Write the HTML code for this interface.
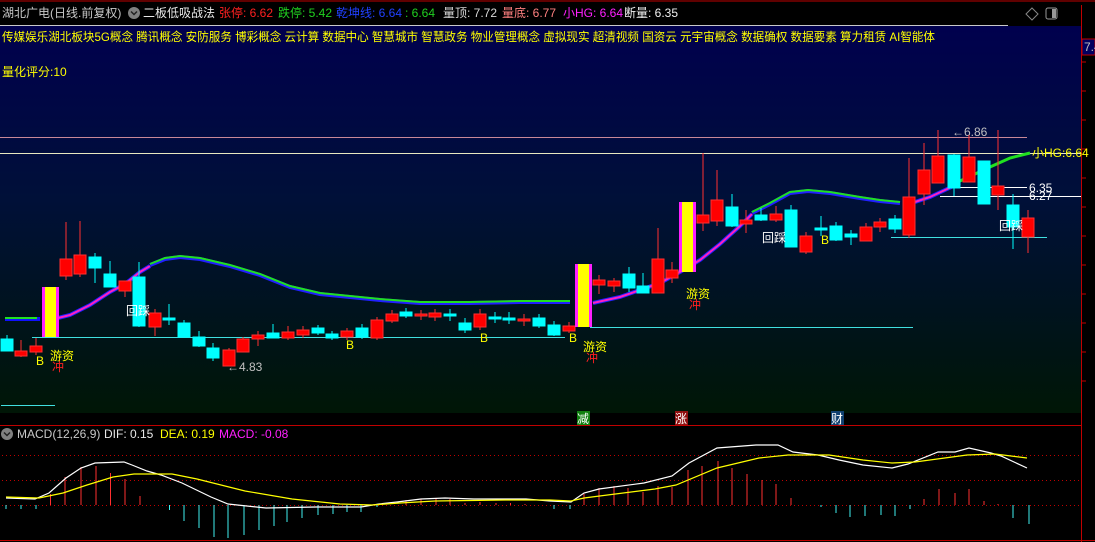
<!DOCTYPE html>
<html><head><meta charset="utf-8"><style>
html,body{margin:0;padding:0;background:#000;width:1095px;height:542px;overflow:hidden}
svg{display:block}
text{font-family:"Liberation Sans","WenQuanYi Zen Hei","Noto Sans CJK SC",sans-serif;font-size:12px}
</style></head><body>
<svg width="1095" height="542" viewBox="0 0 1095 542" xmlns="http://www.w3.org/2000/svg">
<defs>
<linearGradient id="bg" x1="0" y1="0" x2="0" y2="1">
<stop offset="0" stop-color="#00004e"/><stop offset="0.45" stop-color="#001038"/><stop offset="1" stop-color="#001606"/>
</linearGradient>
</defs>
<rect width="1095" height="542" fill="#000"/>
<rect x="0" y="26" width="1081" height="387" fill="url(#bg)"/>
<line x1="0" y1="1" x2="1095" y2="1" stroke="#c00000" stroke-width="1"/>
<line x1="0" y1="25.5" x2="1008" y2="25.5" stroke="#c8c8c8"/>
<rect x="1081" y="5" width="14" height="408" fill="#000"/>
<line x1="1081.5" y1="5" x2="1081.5" y2="542" stroke="#c00000"/>
<rect x="1082" y="39" width="13" height="16" fill="#000060" stroke="#c00000"/>
<text x="1084" y="51" fill="#c0c0c0" font-size="11">7.4</text>
<g stroke="#c00000"><line x1="1081" y1="62" x2="1086" y2="62"/><line x1="1081" y1="91" x2="1086" y2="91"/><line x1="1081" y1="120" x2="1086" y2="120"/><line x1="1081" y1="149" x2="1086" y2="149"/><line x1="1081" y1="178" x2="1086" y2="178"/><line x1="1081" y1="207" x2="1086" y2="207"/><line x1="1081" y1="236" x2="1086" y2="236"/><line x1="1081" y1="265" x2="1086" y2="265"/><line x1="1081" y1="294" x2="1086" y2="294"/><line x1="1081" y1="323" x2="1086" y2="323"/><line x1="1081" y1="352" x2="1086" y2="352"/><line x1="1081" y1="381" x2="1086" y2="381"/></g>

<text x="2" y="17" fill="#c8c8c8">湖北广电(日线.前复权)</text>
<circle cx="134" cy="13" r="6" fill="#808080"/><path d="M131 11.5l3 3 3-3" stroke="#222" stroke-width="1.5" fill="none"/>
<text x="143" y="17" fill="#e8e8e8">二板低吸战法</text>
<text x="219" y="17" fill="#ff2020">张停: 6.62</text>
<text x="278" y="17" fill="#20d020">跌停: 5.42</text>
<text x="336" y="17" fill="#2040ff">乾坤线: 6.64</text>
<text x="405" y="17" fill="#20d020">: 6.64</text>
<text x="443" y="17" fill="#d8d8d8">量顶: 7.72</text>
<text x="502" y="17" fill="#ff8080">量底: 6.77</text>
<text x="563" y="17" fill="#ff20ff">小HG: 6.64</text>
<text x="624" y="17" fill="#f0f0f0">断量: 6.35</text>
<path d="M1032 8l6 6-6 6-6-6z" stroke="#888" fill="none"/>
<rect x="1046" y="8" width="11" height="11" rx="2" stroke="#999" fill="none"/><rect x="1052" y="9" width="4" height="9" fill="#999"/>

<text x="2" y="41" fill="#ffff00" textLength="933" lengthAdjust="spacingAndGlyphs">传媒娱乐湖北板块5G概念 腾讯概念 安防服务 博彩概念 云计算 数据中心 智慧城市 智慧政务 物业管理概念 虚拟现实 超清视频 国资云 元宇宙概念 数据确权 数据要素 算力租赁 AI智能体</text>
<text x="2" y="76" fill="#ffff00">量化评分:10</text>

<line x1="0" y1="137.5" x2="1027" y2="137.5" stroke="#c88898"/>
<line x1="0" y1="153.5" x2="1081" y2="153.5" stroke="#e8e8c0"/>
<line x1="955" y1="187.5" x2="1027" y2="187.5" stroke="#ffffff"/>
<line x1="940" y1="196.5" x2="1081" y2="196.5" stroke="#ffffff"/>
<line x1="32" y1="337.5" x2="565" y2="337.5" stroke="#40e0e0"/>
<line x1="590" y1="327.5" x2="913" y2="327.5" stroke="#40e0e0"/>
<line x1="891" y1="237.5" x2="1047" y2="237.5" stroke="#40e0e0"/>
<line x1="1" y1="405.5" x2="55" y2="405.5" stroke="#40e0e0"/>
<text x="952" y="136" fill="#c0c0c0">←6.86</text>
<text x="1029" y="192" fill="#ffffff">6.35</text>
<text x="1029" y="200" fill="#ffffff">6.27</text>
<text x="1032" y="157" fill="#ffff00">小HG:6.64</text>

<polyline points="5,319 40,319" stroke="#1010ff" stroke-width="4" fill="none"/>
<polyline points="5,318 37,318" stroke="#20e020" stroke-width="2" fill="none"/>
<polyline points="58,318 70,315 90,305 110,292 125,284 140,272 150,266" stroke="#2020ff" stroke-width="4" fill="none"/>
<polyline points="58,318 70,315 90,305 110,292 125,284 140,272 150,266" stroke="#ff20c0" stroke-width="2" fill="none"/>
<polyline points="150,265 165,259 180,257 200,259 230,266 260,275 290,287 320,294 350,297 380,300 420,303 470,303 520,302 570,302" stroke="#2020ff" stroke-width="4" fill="none"/>
<polyline points="150,264 165,258 180,256 200,258 230,265 260,274 290,286 320,293 350,296 380,299 420,302 470,302 520,301 570,301" stroke="#20e020" stroke-width="2" fill="none"/>
<polyline points="593,303 620,297 640,290 660,283 680,272 700,260 720,244 740,226 752,214" stroke="#2020ff" stroke-width="4" fill="none"/>
<polyline points="593,303 620,297 640,290 660,283 680,272 700,260 720,244 740,226 752,214" stroke="#ff20c0" stroke-width="2" fill="none"/>
<polyline points="752,213 770,204 790,193 808,191 830,193 860,198 880,201 900,203" stroke="#2020ff" stroke-width="4" fill="none"/>
<polyline points="752,212 770,203 790,192 808,190 830,192 860,197 880,200 900,202" stroke="#20e020" stroke-width="2" fill="none"/>
<polyline points="915,202 930,197 945,190 960,183" stroke="#2020ff" stroke-width="4" fill="none"/>
<polyline points="915,202 930,197 945,190 960,183" stroke="#ff20c0" stroke-width="2" fill="none"/>
<polyline points="960,181 990,167 1010,158 1030,153" stroke="#20e020" stroke-width="3" fill="none"/>

<g stroke-width="1">
<g fill="#00ffff" stroke="#00ffff">
<line x1="7" y1="335" x2="7" y2="351"/><rect x="1" y="339" width="12" height="12"/>
<line x1="95" y1="253" x2="95" y2="283"/><rect x="89" y="257" width="12" height="11"/>
<line x1="110" y1="261" x2="110" y2="287"/><rect x="104" y="274" width="12" height="13"/>
<line x1="139" y1="262" x2="139" y2="327"/><rect x="133" y="277" width="12" height="49"/>
<line x1="169" y1="304" x2="169" y2="325"/><rect x="163" y="318" width="12" height="2"/>
<line x1="184" y1="320" x2="184" y2="337"/><rect x="178" y="323" width="12" height="14"/>
<line x1="199" y1="331" x2="199" y2="347"/><rect x="193" y="337" width="12" height="9"/>
<line x1="213" y1="343" x2="213" y2="361"/><rect x="207" y="348" width="12" height="10"/>
<line x1="273" y1="324" x2="273" y2="338"/><rect x="267" y="333" width="12" height="5"/>
<line x1="318" y1="325" x2="318" y2="335"/><rect x="312" y="328" width="12" height="5"/>
<line x1="332" y1="331" x2="332" y2="340"/><rect x="326" y="334" width="12" height="4"/>
<line x1="362" y1="324" x2="362" y2="339"/><rect x="356" y="328" width="12" height="9"/>
<line x1="406" y1="308" x2="406" y2="318"/><rect x="400" y="312" width="12" height="4"/>
<line x1="450" y1="309" x2="450" y2="321"/><rect x="444" y="314" width="12" height="2"/>
<line x1="465" y1="318" x2="465" y2="333"/><rect x="459" y="323" width="12" height="7"/>
<line x1="495" y1="312" x2="495" y2="323"/><rect x="489" y="317" width="12" height="2"/>
<line x1="509" y1="312" x2="509" y2="324"/><rect x="503" y="318" width="12" height="2"/>
<line x1="539" y1="314" x2="539" y2="328"/><rect x="533" y="318" width="12" height="8"/>
<line x1="554" y1="321" x2="554" y2="336"/><rect x="548" y="325" width="12" height="10"/>
<line x1="629" y1="267" x2="629" y2="292"/><rect x="623" y="274" width="12" height="14"/>
<line x1="643" y1="273" x2="643" y2="293"/><rect x="637" y="286" width="12" height="7"/>
<line x1="732" y1="194" x2="732" y2="227"/><rect x="726" y="207" width="12" height="19"/>
<line x1="761" y1="208" x2="761" y2="221"/><rect x="755" y="215" width="12" height="5"/>
<line x1="791" y1="205" x2="791" y2="247"/><rect x="785" y="210" width="12" height="37"/>
<line x1="821" y1="216" x2="821" y2="236"/><rect x="815" y="228" width="12" height="2"/>
<line x1="836" y1="222" x2="836" y2="241"/><rect x="830" y="226" width="12" height="14"/>
<line x1="851" y1="230" x2="851" y2="245"/><rect x="845" y="234" width="12" height="3"/>
<line x1="895" y1="215" x2="895" y2="233"/><rect x="889" y="219" width="12" height="10"/>
<line x1="954" y1="154" x2="954" y2="196"/><rect x="948" y="155" width="12" height="33"/>
<line x1="984" y1="161" x2="984" y2="204"/><rect x="978" y="161" width="12" height="43"/>
<line x1="1013" y1="194" x2="1013" y2="249"/><rect x="1007" y="205" width="12" height="22"/>
</g>
<g fill="#ff0000" stroke="#ff3030">
<line x1="21" y1="340" x2="21" y2="357"/><rect x="15" y="351" width="12" height="5"/>
<line x1="36" y1="338" x2="36" y2="355"/><rect x="30" y="346" width="12" height="6"/>
<line x1="66" y1="222" x2="66" y2="280"/><rect x="60" y="259" width="12" height="17"/>
<line x1="80" y1="221" x2="80" y2="277"/><rect x="74" y="255" width="12" height="19"/>
<line x1="125" y1="281" x2="125" y2="297"/><rect x="119" y="281" width="12" height="10"/>
<line x1="155" y1="309" x2="155" y2="336"/><rect x="149" y="313" width="12" height="14"/>
<line x1="229" y1="348" x2="229" y2="366"/><rect x="223" y="350" width="12" height="16"/>
<line x1="243" y1="337" x2="243" y2="352"/><rect x="237" y="339" width="12" height="13"/>
<line x1="258" y1="331" x2="258" y2="346"/><rect x="252" y="335" width="12" height="4"/>
<line x1="288" y1="326" x2="288" y2="340"/><rect x="282" y="332" width="12" height="6"/>
<line x1="303" y1="326" x2="303" y2="338"/><rect x="297" y="330" width="12" height="5"/>
<line x1="347" y1="328" x2="347" y2="340"/><rect x="341" y="331" width="12" height="6"/>
<line x1="377" y1="317" x2="377" y2="340"/><rect x="371" y="320" width="12" height="18"/>
<line x1="392" y1="310" x2="392" y2="323"/><rect x="386" y="314" width="12" height="7"/>
<line x1="421" y1="310" x2="421" y2="320"/><rect x="415" y="314" width="12" height="2"/>
<line x1="435" y1="309" x2="435" y2="321"/><rect x="429" y="313" width="12" height="4"/>
<line x1="480" y1="309" x2="480" y2="330"/><rect x="474" y="314" width="12" height="13"/>
<line x1="524" y1="314" x2="524" y2="326"/><rect x="518" y="319" width="12" height="2"/>
<line x1="569" y1="322" x2="569" y2="333"/><rect x="563" y="326" width="12" height="5"/>
<line x1="599" y1="275" x2="599" y2="294"/><rect x="593" y="280" width="12" height="5"/>
<line x1="614" y1="278" x2="614" y2="292"/><rect x="608" y="281" width="12" height="5"/>
<line x1="658" y1="228" x2="658" y2="293"/><rect x="652" y="259" width="12" height="34"/>
<line x1="672" y1="262" x2="672" y2="283"/><rect x="666" y="270" width="12" height="8"/>
<line x1="703" y1="153" x2="703" y2="231"/><rect x="697" y="215" width="12" height="8"/>
<line x1="717" y1="170" x2="717" y2="226"/><rect x="711" y="200" width="12" height="21"/>
<line x1="746" y1="210" x2="746" y2="233"/><rect x="740" y="220" width="12" height="4"/>
<line x1="776" y1="206" x2="776" y2="222"/><rect x="770" y="214" width="12" height="6"/>
<line x1="806" y1="232" x2="806" y2="254"/><rect x="800" y="236" width="12" height="16"/>
<line x1="866" y1="223" x2="866" y2="241"/><rect x="860" y="227" width="12" height="14"/>
<line x1="880" y1="218" x2="880" y2="232"/><rect x="874" y="222" width="12" height="5"/>
<line x1="909" y1="158" x2="909" y2="238"/><rect x="903" y="197" width="12" height="38"/>
<line x1="924" y1="143" x2="924" y2="205"/><rect x="918" y="170" width="12" height="24"/>
<line x1="938" y1="130" x2="938" y2="183"/><rect x="932" y="156" width="12" height="27"/>
<line x1="969" y1="135" x2="969" y2="182"/><rect x="963" y="157" width="12" height="25"/>
<line x1="998" y1="130" x2="998" y2="210"/><rect x="992" y="186" width="12" height="9"/>
<line x1="1028" y1="210" x2="1028" y2="253"/><rect x="1022" y="218" width="12" height="19"/>
</g>
<rect x="42" y="287" width="17" height="50" fill="#ff20ff"/><rect x="45" y="287" width="11" height="50" fill="#ffff00"/>
<rect x="575" y="264" width="17" height="63" fill="#ff20ff"/><rect x="578" y="264" width="11" height="63" fill="#ffff00"/>
<rect x="679" y="202" width="17" height="70" fill="#ff20ff"/><rect x="682" y="202" width="11" height="70" fill="#ffff00"/>
</g>

<text x="126" y="315" fill="#ffffff">回踩</text>
<text x="762" y="242" fill="#ffffff">回踩</text>
<text x="999" y="230" fill="#ffffff">回踩</text>
<text x="50" y="360" fill="#ffff00">游资</text>
<text x="583" y="351" fill="#ffff00">游资</text>
<text x="686" y="298" fill="#ffff00">游资</text>
<text x="52" y="371" fill="#ff2020" font-size="11">冲</text>
<text x="586" y="362" fill="#ff2020" font-size="11">冲</text>
<text x="689" y="309" fill="#ff2020" font-size="11">冲</text>
<text x="36" y="365" fill="#ffff00" font-size="11">B</text>
<text x="346" y="349" fill="#ffff00" font-size="11">B</text>
<text x="480" y="342" fill="#ffff00" font-size="11">B</text>
<text x="569" y="342" fill="#ffff00" font-size="11">B</text>
<text x="821" y="244" fill="#ffff00" font-size="11">B</text>
<text x="227" y="371" fill="#c0c0c0">←4.83</text>

<rect x="577" y="411" width="13" height="14" fill="#108010"/><text x="577" y="423" fill="#fff">减</text>
<rect x="675" y="411" width="13" height="14" fill="#901010"/><text x="675" y="423" fill="#fff">涨</text>
<rect x="831" y="411" width="13" height="14" fill="#104070"/><text x="831" y="423" fill="#fff">财</text>

<line x1="0" y1="425.5" x2="1081" y2="425.5" stroke="#c00000"/>
<line x1="0" y1="540.5" x2="1095" y2="540.5" stroke="#c00000"/>
<circle cx="7" cy="434" r="6" fill="#808080"/><path d="M4 432.5l3 3 3-3" stroke="#222" stroke-width="1.5" fill="none"/>
<text x="17" y="438" fill="#c8c8c8">MACD(12,26,9)</text>
<text x="104" y="438" fill="#e8e8e8">DIF: 0.15</text>
<text x="160" y="438" fill="#ffff00">DEA: 0.19</text>
<text x="219" y="438" fill="#ff20ff">MACD: -0.08</text>
<g stroke="#c00000" stroke-dasharray="1,3">
<line x1="2" y1="455.5" x2="1081" y2="455.5"/><line x1="2" y1="480.5" x2="1081" y2="480.5"/><line x1="2" y1="505.5" x2="1081" y2="505.5"/>
</g>
<g stroke="#ff3030" stroke-width="1">
<line x1="50.5" y1="505" x2="50.5" y2="494"/><line x1="65" y1="505" x2="65" y2="477"/><line x1="81" y1="505" x2="81" y2="467"/><line x1="96" y1="505" x2="96" y2="466"/><line x1="110.5" y1="505" x2="110.5" y2="473"/><line x1="125" y1="505" x2="125" y2="479"/><line x1="140" y1="505" x2="140" y2="496"/>
<line x1="406" y1="505" x2="406" y2="500"/><line x1="421" y1="505" x2="421" y2="499"/><line x1="436" y1="505" x2="436" y2="498"/><line x1="450" y1="505" x2="450" y2="499"/><line x1="465" y1="505" x2="465" y2="503"/><line x1="480" y1="505" x2="480" y2="502"/><line x1="496" y1="505" x2="496" y2="503"/><line x1="510.5" y1="505" x2="510.5" y2="503"/><line x1="525" y1="505" x2="525" y2="504"/>
<line x1="584" y1="505" x2="584" y2="494"/><line x1="599" y1="505" x2="599" y2="488"/><line x1="614" y1="505" x2="614" y2="486"/><line x1="628" y1="505" x2="628" y2="488"/><line x1="643" y1="505" x2="643" y2="492"/><line x1="658" y1="505" x2="658" y2="486"/><line x1="672" y1="505" x2="672" y2="487"/><line x1="688" y1="505" x2="688" y2="470"/><line x1="702" y1="505" x2="702" y2="466"/><line x1="718" y1="505" x2="718" y2="461"/><line x1="732" y1="505" x2="732" y2="468"/><line x1="747" y1="505" x2="747" y2="474"/><line x1="762" y1="505" x2="762" y2="480"/><line x1="776" y1="505" x2="776" y2="484"/><line x1="791" y1="505" x2="791" y2="498"/>
<line x1="924" y1="505" x2="924" y2="499"/><line x1="939" y1="505" x2="939" y2="489"/><line x1="955" y1="505" x2="955" y2="493"/><line x1="969" y1="505" x2="969" y2="489"/><line x1="984" y1="505" x2="984" y2="501"/><line x1="998" y1="505" x2="998" y2="504"/>
</g>
<g stroke="#40f0f0" stroke-width="1">
<line x1="6" y1="505" x2="6" y2="509"/><line x1="21" y1="505" x2="21" y2="509"/><line x1="36" y1="505" x2="36" y2="509"/>
<line x1="169.5" y1="505" x2="169.5" y2="510"/><line x1="184" y1="505" x2="184" y2="521"/><line x1="199" y1="505" x2="199" y2="528"/><line x1="214" y1="505" x2="214" y2="537"/><line x1="228" y1="505" x2="228" y2="538"/><line x1="244" y1="505" x2="244" y2="535"/><line x1="259" y1="505" x2="259" y2="530"/><line x1="274" y1="505" x2="274" y2="526"/><line x1="287" y1="505" x2="287" y2="522"/><line x1="302" y1="505" x2="302" y2="518"/><line x1="318" y1="505" x2="318" y2="515"/><line x1="333" y1="505" x2="333" y2="514"/><line x1="347" y1="505" x2="347" y2="512"/><line x1="361" y1="505" x2="361" y2="512"/><line x1="377" y1="505" x2="377" y2="507"/>
<line x1="554" y1="505" x2="554" y2="509"/><line x1="570" y1="505" x2="570" y2="509"/>
<line x1="821" y1="505" x2="821" y2="507"/><line x1="836" y1="505" x2="836" y2="513"/><line x1="850" y1="505" x2="850" y2="517"/><line x1="865" y1="505" x2="865" y2="516"/><line x1="881" y1="505" x2="881" y2="515"/><line x1="895" y1="505" x2="895" y2="516"/><line x1="910" y1="505" x2="910" y2="509"/>
<line x1="1013" y1="505" x2="1013" y2="518"/><line x1="1029" y1="505" x2="1029" y2="524"/>
</g>
<polyline fill="none" stroke="#ffffff" stroke-width="1.2" points="6,498 35,499 49,493 66,478 81,468 95,463 124,462 132,465 147,471 161,475 182,483 211,497 228,504 266,508 316,507 361,507 379,504 397,502 421,499 445,498 474,499 526,499 550,501 571,502 584,493 599,489 644,483 672,476 689,463 717,448 756,445 778,445 793,452 818,455 839,460 863,465 892,468 908,464 938,452 955,452 969,448 991,453 1001,456 1027,468"/>
<polyline fill="none" stroke="#ffff00" stroke-width="1.2" points="6,497 39,498 63,493 87,485 113,477 134,474 172,474 197,479 245,491 292,499 340,504 372,505 400,503 435,501 505,500 550,500 571,501 584,498 655,489 676,485 717,468 759,458 788,455 829,455 863,460 892,463 915,462 967,455 995,454 1027,458"/>
</svg>
</body></html>
